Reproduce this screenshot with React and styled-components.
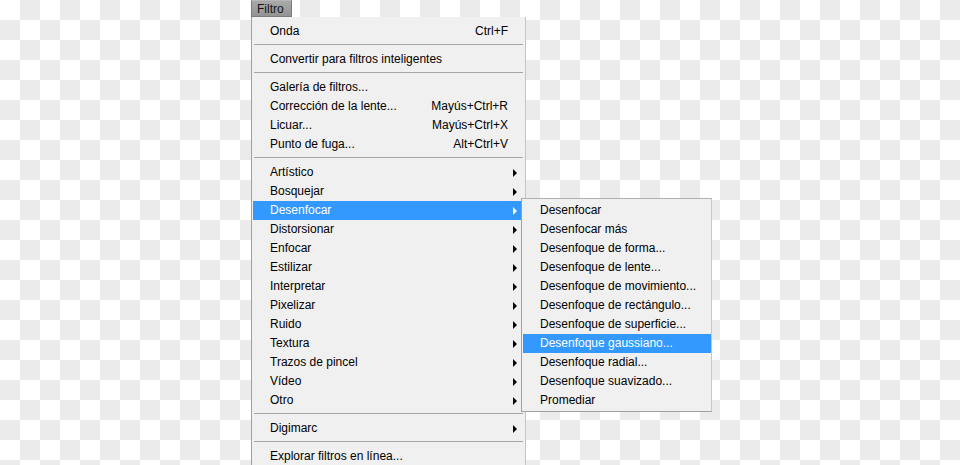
import React from "react";
import styled, { createGlobalStyle } from "styled-components";

const Global = createGlobalStyle`
  html, body { margin: 0; padding: 0; }
  body {
    font-family: "Liberation Sans", Arial, sans-serif;
    font-size: 12px;
    color: #000;
  }
`;

const Page = styled.div`
  width: 960px;
  height: 465px;
  overflow: hidden;
  box-sizing: border-box;
  padding-left: 251px;
  background: repeating-conic-gradient(#ebebeb 0 25%, #ffffff 0 50%) 0 0 / 40px 40px;
`;

const MenuColumn = styled.div`
  display: flex;
  flex-direction: column;
  width: 275px;
`;

const Tab = styled.div`
  box-sizing: border-box;
  width: 41px;
  height: 17px;
  padding-left: 5px;
  line-height: 16px;
  color: #161616;
  background: linear-gradient(#a9a9a9, #939393);
  border: 1px solid #7a7a7a;
  border-top-color: #b5b5b5;
`;

const Panel = styled.div`
  box-sizing: border-box;
  display: flex;
  flex-direction: column;
  padding: 5px 2px 0 1px;
  background: #f0f0f0;
  border-left: 1px solid #a0a0a0;
  border-right: 1px solid #c4c4c4;
`;

const Item = styled.div`
  position: relative;
  display: grid;
  grid-template-columns: 1fr auto 15px;
  align-items: center;
  height: 19px;
  line-height: 19px;
  padding-left: 17px;
  white-space: nowrap;
  background: ${(p) => (p.$active ? "#3399ff" : "transparent")};
  color: ${(p) => (p.$active ? "#ffffff" : "#000000")};
`;

const Shortcut = styled.span`
  text-align: right;
`;

const Arrow = styled.span`
  width: 0;
  height: 0;
  margin-left: 5px;
  border-left: 4px solid ${(p) => (p.$active ? "#ffffff" : "#000000")};
  border-top: 4px solid transparent;
  border-bottom: 4px solid transparent;
`;

const Separator = styled.div`
  height: 9px;
  margin-left: 1px;
  box-sizing: border-box;
  padding-top: 3px;
  &::before {
    content: "";
    display: block;
    height: 1px;
    background: #a6a6a6;
  }
`;

const Submenu = styled.div`
  position: absolute;
  top: -3px;
  left: 268px;
  box-sizing: border-box;
  width: 191px;
  display: flex;
  flex-direction: column;
  padding: 2px 0 1px 1px;
  background: #f0f0f0;
  border: 1px solid #a0a0a0;
  border-top-color: #b0b0b0;
  border-right-color: #c8c8c8;
  z-index: 2;
`;

const SubItem = styled.div`
  height: 19px;
  line-height: 19px;
  padding-left: 17px;
  white-space: nowrap;
  background: ${(p) => (p.$active ? "#3399ff" : "transparent")};
  color: ${(p) => (p.$active ? "#ffffff" : "#000000")};
`;

const top = [
  { label: "Onda", sc: "Ctrl+F" },
  "sep",
  { label: "Convertir para filtros inteligentes" },
  "sep",
  { label: "Galería de filtros..." },
  { label: "Corrección de la lente...", sc: "Mayús+Ctrl+R" },
  { label: "Licuar...", sc: "Mayús+Ctrl+X" },
  { label: "Punto de fuga...", sc: "Alt+Ctrl+V" },
  "sep",
  { label: "Artístico", sub: true },
  { label: "Bosquejar", sub: true },
  { label: "Desenfocar", sub: true, active: true, open: true },
  { label: "Distorsionar", sub: true },
  { label: "Enfocar", sub: true },
  { label: "Estilizar", sub: true },
  { label: "Interpretar", sub: true },
  { label: "Pixelizar", sub: true },
  { label: "Ruido", sub: true },
  { label: "Textura", sub: true },
  { label: "Trazos de pincel", sub: true },
  { label: "Vídeo", sub: true },
  { label: "Otro", sub: true },
  "sep",
  { label: "Digimarc", sub: true },
  "sep",
  { label: "Explorar filtros en línea..." },
];

const blurItems = [
  "Desenfocar",
  "Desenfocar más",
  "Desenfoque de forma...",
  "Desenfoque de lente...",
  "Desenfoque de movimiento...",
  "Desenfoque de rectángulo...",
  "Desenfoque de superficie...",
  "Desenfoque gaussiano...",
  "Desenfoque radial...",
  "Desenfoque suavizado...",
  "Promediar",
];

export default function App() {
  return (
    <>
      <Global />
      <Page>
        <MenuColumn>
          <Tab>Filtro</Tab>
          <Panel>
            {top.map((it, i) =>
              it === "sep" ? (
                <Separator key={i} />
              ) : (
                <Item key={i} $active={it.active}>
                  <span>{it.label}</span>
                  <Shortcut>{it.sc || ""}</Shortcut>
                  {it.sub ? <Arrow $active={it.active} /> : <span />}
                  {it.open && (
                    <Submenu>
                      {blurItems.map((b, j) => (
                        <SubItem key={j} $active={j === 7}>
                          {b}
                        </SubItem>
                      ))}
                    </Submenu>
                  )}
                </Item>
              )
            )}
          </Panel>
        </MenuColumn>
      </Page>
    </>
  );
}
